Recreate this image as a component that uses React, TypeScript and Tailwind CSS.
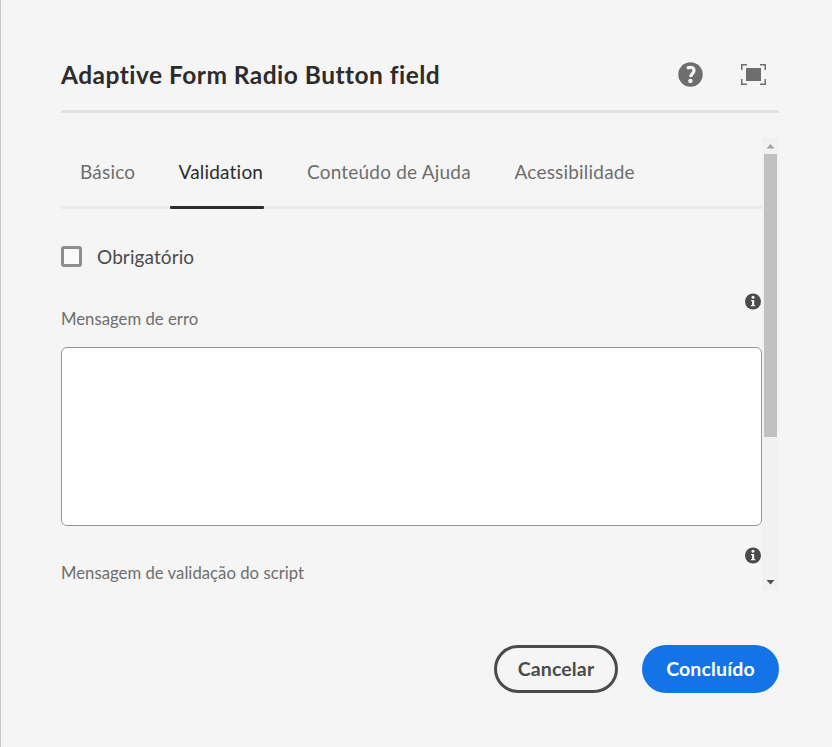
import React from "react";

const clean = "font-['Lato','Open_Sans',sans-serif] [font-variant-ligatures:none]";

function HelpIcon() {
  return (
    <svg width="25" height="25" viewBox="0 0 25 25" className="block">
      <circle cx="12.5" cy="12.5" r="12.2" fill="#6e6e6e" />
      <path d="M9 6.3C12 4.6 16 5.2 16 8.5C16 11.6 12.8 11.8 12.8 14.9" fill="none" stroke="#f5f5f5" strokeWidth="3.1" />
      <circle cx="12.4" cy="18.9" r="2.2" fill="#f5f5f5" />
    </svg>
  );
}

function FullScreenIcon() {
  return (
    <svg width="25" height="21" viewBox="0 0 25 21" className="block">
      <rect x="5" y="4" width="15" height="13" fill="#6e6e6e" />
      <path d="M.75 6V.75H6M19 .75h5.25V6M24.25 15v5.25H19M6 20.25H.75V15" fill="none" stroke="#6e6e6e" strokeWidth="1.5" />
    </svg>
  );
}

function InfoIcon() {
  return (
    <svg width="16" height="17" viewBox="0 -0.5 16 17" className="block">
      <circle cx="8" cy="8" r="8" fill="#4b4b4b" />
      <circle cx="8" cy="3.8" r="1.5" fill="#f5f5f5" />
      <path d="M6 6.4h3.2v5h1v1.4H6v-1.4h1V7.8H6z" fill="#f5f5f5" />
    </svg>
  );
}

export default function App() {
  return (
    <div className={`h-[747px] w-[832px] overflow-hidden border-l border-[#c8c8c8] bg-[#f5f5f5] pr-[53px] pl-[60px] ${clean}`}>
      <header className="flex h-[113px] items-start border-b-[3px] border-[#e1e1e1]">
        <h1 className="mt-[58px] grow text-[24.5px] leading-[34px] font-bold tracking-[0.47px] whitespace-nowrap text-[#2c2c2c]">
          Adaptive Form Radio Button field
        </h1>
        <div className="mt-[62px] mr-[38px]"><HelpIcon /></div>
        <div className="mt-[64px] mr-[13px]"><FullScreenIcon /></div>
      </header>

      <div className="mt-[25px] flex h-[452px] w-[717px] overflow-hidden">
        <main className="w-[701px] shrink-0">
          <nav className="flex h-[71px] border-b-[3px] border-[#eaeaea] text-[19px] leading-[28px] tracking-[0.2px] whitespace-nowrap text-[#6e6e6e]">
            <div className="w-[109px] pt-[20px] pl-[19px]">Básico</div>
            <div className="h-[71px] w-[94px] shrink-0 pt-[20px] text-[#2c2c2c]">
              <div className="h-12 pl-[8.5px]">Validation</div>
              <div className="h-[3px] rounded-[1px] bg-[#2c2c2c]" />
            </div>
            <div className="w-[206px] pt-[20px] pl-[43px]">Conteúdo de Ajuda</div>
            <div className="pt-[20px] pl-[44.5px]">Acessibilidade</div>
          </nav>
          <label className="mt-[32px] flex h-[30px] items-center text-[19px] tracking-[0.1px] text-[#4b4b4b]">
            <span className="mr-[15px] size-[21px] rounded-[3px] border-[3px] border-[#8e8e8e] bg-[#fafafa]" />
            <span className="pt-0.5">Obrigatório</span>
          </label>
          <div className="mt-[22px] flex h-[54px] justify-between text-[#6e6e6e]">
            <span className="mt-[13px] text-[16.7px] leading-[26px] tracking-[0.03px]">Mensagem de erro</span>
            <div className="mr-px"><InfoIcon /></div>
          </div>
          <textarea className="block h-[179px] w-[701px] resize-none rounded-[6px] border border-[#959595] bg-white" />
          <div className="mt-[21px] flex justify-between text-[#6e6e6e]">
            <span className="mt-[13px] text-[16.7px] leading-[26px] tracking-[0.03px]">Mensagem de validação do script</span>
            <div className="mr-px"><InfoIcon /></div>
          </div>
        </main>
        <div className="flex h-[452px] w-4 flex-col items-center bg-[#f1f1f1]">
          <svg width="16" height="16" className="block shrink-0"><path d="M4.5 10.5h8L8.5 6z" fill="#a3a3a3" /></svg>
          <div className="h-[283px] w-[13px] bg-[#c1c1c1]" />
          <svg width="16" height="16" className="mt-auto block shrink-0"><path d="M4.5 6h8L8.5 10.5z" fill="#505050" /></svg>
        </div>
      </div>

      <footer className="mt-[55px] flex justify-end gap-6 text-[19.5px] font-bold tracking-[0.15px]">
        <button className="h-12 w-[124px] rounded-full border-[3px] border-[#4b4b4b] text-[#4b4b4b]">Cancelar</button>
        <button className="h-12 w-[137px] rounded-full bg-[#1473e6] text-white">Concluído</button>
      </footer>
    </div>
  );
}
